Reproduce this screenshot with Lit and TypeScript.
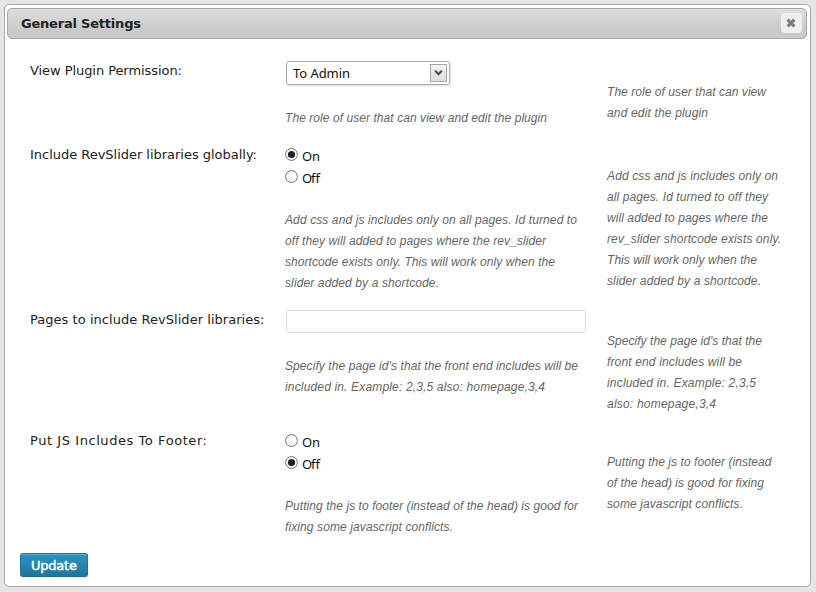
import { LitElement, html, css, svg, nothing } from "lit";
import { customElement } from "lit/decorators.js";

interface Line { text: string; width: number }
interface Row {
  label: string;
  labelWidth: number;
  kind: "select" | "radio" | "text";
  value?: string;
  height: number;
  help: Line[];
  side: Line[];
}
const l = (text: string, width: number): Line => ({ text, width });

const rows: Row[] = [
  {
    label: "View Plugin Permission:", labelWidth: 152, kind: "select", value: "To Admin", height: 84,
    help: [l("The role of user that can view and edit the plugin", 262)],
    side: [l("The role of user that can view", 159), l("and edit the plugin", 101)],
  },
  {
    label: "Include RevSlider libraries globally:", labelWidth: 227, kind: "radio", value: "On", height: 165,
    help: [
      l("Add css and js includes only on all pages. Id turned to", 292),
      l("off they will added to pages where the rev_slider", 261),
      l("shortcode exists only. This will work only when the", 270),
      l("slider added by a shortcode.", 154),
    ],
    side: [
      l("Add css and js includes only on", 171), l("all pages. Id turned to off they", 161),
      l("will added to pages where the", 161), l("rev_slider shortcode exists only.", 174),
      l("This will work only when the", 150), l("slider added by a shortcode.", 154),
    ],
  },
  {
    label: "Pages to include RevSlider libraries:", labelWidth: 234.5, kind: "text", height: 121,
    help: [
      l("Specify the page id's that the front end includes will be", 293),
      l("included in. Example: 2,3,5 also: homepage,3,4", 260),
    ],
    side: [
      l("Specify the page id's that the", 155), l("front end includes will be", 135),
      l("included in. Example: 2,3,5", 149), l("also: homepage,3,4", 109),
    ],
  },
  {
    label: "Put JS Includes To Footer:", labelWidth: 177, kind: "radio", value: "Off", height: 121,
    help: [
      l("Putting the js to footer (instead of the head) is good for", 293),
      l("fixing some javascript conflicts.", 168),
    ],
    side: [
      l("Putting the js to footer (instead", 164.5), l("of the head) is good for fixing", 157),
      l("some javascript conflicts.", 136),
    ],
  },
];

/** One line of text spread to an exact width. */
const fit = (t: string, w: number, cls: string, base = 14.5) =>
  html`<svg class="line ${cls}" width=${w} height="21">${svg`<text x="0" y=${base} textLength=${w}>${t}</text>`}</svg>`;

@customElement("app-root")
export class AppRoot extends LitElement {
  static styles = css`
    :host { display: block; box-sizing: border-box; height: 592px; padding: 4px 5px 5px 4px; background: #e5e5e5; overflow: hidden; }
    * { box-sizing: border-box; }
    .dialog { height: 583px; border: 1px solid #a9a9a9; border-radius: 5px; background: #fff; padding: 3px 3px 0 2px; }
    .head { height: 31px; border: 1px solid #a6a6a6; border-radius: 5px; background: linear-gradient(#dedede, #c9c9c9 75%, #cbcbcb); display: flex; align-items: center; justify-content: space-between; padding: 0 4px 0 13px; }
    .close { width: 21px; height: 20px; border: 0; border-radius: 4px; background: #f0f0f0; padding: 0 2px 1px 0; display: grid; place-items: center; margin-top: -1px; }
    .line { display: block; overflow: visible; }
    .title { font: bold 13px "DejaVu Sans", sans-serif; fill: #222; }
    .label { font: 13px "DejaVu Sans", sans-serif; fill: #222; }
    .desc { font: italic 12px "Liberation Sans", Arial, sans-serif; fill: #666; }
    .rows { padding: 21px 0 0 23px; }
    .row { display: grid; grid-template-columns: 255px 322px 1fr; }
    .control { height: 47px; padding-top: 1px; padding-left: 1px; }
    .control.text { height: 46px; }
    .control.radio { height: 65px; padding: 0; }
    .side { padding-top: 21px; }
    .select { width: 164px; height: 24px; border: 1px solid #aaa; border-radius: 3px; box-shadow: 1px 1px 2px #ddd; display: flex; align-items: center; justify-content: space-between; padding: 0 2px 0 6px; }
    .ui { font: 13px "Noto Sans", sans-serif; fill: #111; }
    .arrow { width: 17px; height: 18px; border: 1px solid #a5a5a5; background: linear-gradient(#f4f4f4, #dcdcdc); display: grid; place-items: center; }
    .input { display: block; width: 300px; height: 23px; border: 1px solid #ddd; border-radius: 3px; background: #fff; }
    .choice { height: 22px; display: flex; gap: 4px; }
    .dot { display: block; width: 13px; height: 13px; margin-top: 4px; }
    .choice .line { margin-top: 2px; }
    .foot { padding: 2px 0 0 13px; }
    .update { display: block; width: 68px; height: 24px; border: 1px solid #21759b; border-bottom-color: #1e6a8d; border-radius: 3px; background: linear-gradient(#2a95c5, #21759b); box-shadow: inset 0 1px 0 rgba(120, 200, 230, 0.5); padding: 1px 0 0 10px; }
    .btn { font: 13px "DejaVu Sans", sans-serif; fill: #fff; stroke: #fff; stroke-width: 0.45px; }
  `;

  private control(r: Row) {
    if (r.kind === "select")
      return html`<div class="control"><div class="select">${fit(r.value!, 57, "ui", 15)}
        <span class="arrow"><svg width="9" height="8"><path d="M1.2 1.8 L4.5 5.2 L7.8 1.8" fill="none" stroke="#505050" stroke-width="2.2"/></svg></span></div></div>`;
    if (r.kind === "text") return html`<div class="control text"><input class="input" /></div>`;
    return html`<div class="control radio">${["On", "Off"].map((o) => html`
      <div class="choice"><svg class="dot"><circle cx="6.5" cy="6.5" r="5.9" fill="#fff" stroke="#707070" stroke-width="1"/>
        ${o === r.value ? svg`<circle cx="6.5" cy="6.5" r="3.6" fill="#222"/>` : nothing}</svg>
        ${fit(o, 18, "ui")}</div>`)}</div>`;
  }

  render() {
    return html`<div class="dialog">
      <div class="head">${fit("General Settings", 120, "title", 15)}
        <button class="close" aria-label="Close"><svg width="10" height="10"><path d="M1.6 1.6 L8.4 8.4 M8.4 1.6 L1.6 8.4" stroke="#7d7d7d" stroke-width="3.1"/></svg></button>
      </div>
      <div class="rows">${rows.map((r) => html`<div class="row" style="height:${r.height}px">
        <div>${fit(r.label, r.labelWidth, "label", 15)}</div>
        <div>${this.control(r)}${r.help.map((h) => fit(h.text, h.width, "desc"))}</div>
        <div class="side">${r.side.map((h) => fit(h.text, h.width, "desc"))}</div>
      </div>`)}</div>
      <div class="foot"><button class="update">${fit("Update", 46, "btn", 15)}</button></div>
    </div>`;
  }
}
